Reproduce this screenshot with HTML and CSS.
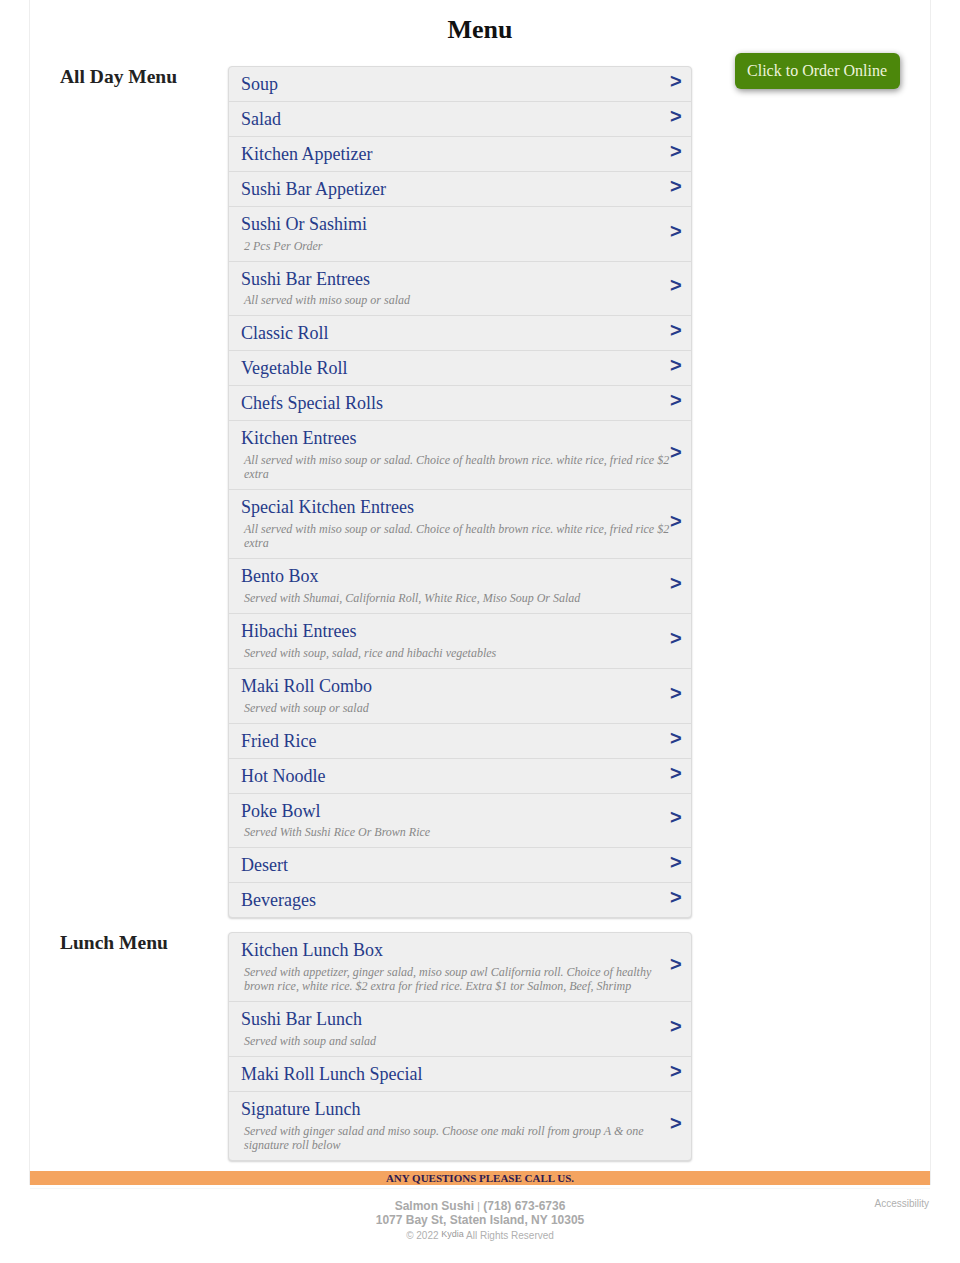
FILE: index.html
```html
<!DOCTYPE html>
<html lang="en">
<head>
<meta charset="utf-8">
<title>Menu</title>
<link rel="stylesheet" href="styles.css">
</head>
<body>
<div class="page">
  <h1 class="title">Menu</h1>

  <section class="section">
    <h2 class="label">All Day Menu</h2>
    <div class="list">
      <a class="row"><div class="info"><div class="name">Soup</div></div><span class="arrow">&gt;</span></a>
      <a class="row"><div class="info"><div class="name">Salad</div></div><span class="arrow">&gt;</span></a>
      <a class="row"><div class="info"><div class="name">Kitchen Appetizer</div></div><span class="arrow">&gt;</span></a>
      <a class="row"><div class="info"><div class="name">Sushi Bar Appetizer</div></div><span class="arrow">&gt;</span></a>
      <a class="row"><div class="info"><div class="name">Sushi Or Sashimi</div><div class="desc">2 Pcs Per Order</div></div><span class="arrow">&gt;</span></a>
      <a class="row"><div class="info"><div class="name">Sushi Bar Entrees</div><div class="desc">All served with miso soup or salad</div></div><span class="arrow">&gt;</span></a>
      <a class="row"><div class="info"><div class="name">Classic Roll</div></div><span class="arrow">&gt;</span></a>
      <a class="row"><div class="info"><div class="name">Vegetable Roll</div></div><span class="arrow">&gt;</span></a>
      <a class="row"><div class="info"><div class="name">Chefs Special Rolls</div></div><span class="arrow">&gt;</span></a>
      <a class="row"><div class="info"><div class="name">Kitchen Entrees</div><div class="desc">All served with miso soup or salad. Choice of health brown rice. white rice, fried rice $2 extra</div></div><span class="arrow">&gt;</span></a>
      <a class="row"><div class="info"><div class="name">Special Kitchen Entrees</div><div class="desc">All served with miso soup or salad. Choice of health brown rice. white rice, fried rice $2 extra</div></div><span class="arrow">&gt;</span></a>
      <a class="row"><div class="info"><div class="name">Bento Box</div><div class="desc">Served with Shumai, California Roll, White Rice, Miso Soup Or Salad</div></div><span class="arrow">&gt;</span></a>
      <a class="row"><div class="info"><div class="name">Hibachi Entrees</div><div class="desc">Served with soup, salad, rice and hibachi vegetables</div></div><span class="arrow">&gt;</span></a>
      <a class="row"><div class="info"><div class="name">Maki Roll Combo</div><div class="desc">Served with soup or salad</div></div><span class="arrow">&gt;</span></a>
      <a class="row"><div class="info"><div class="name">Fried Rice</div></div><span class="arrow">&gt;</span></a>
      <a class="row"><div class="info"><div class="name">Hot Noodle</div></div><span class="arrow">&gt;</span></a>
      <a class="row"><div class="info"><div class="name">Poke Bowl</div><div class="desc">Served With Sushi Rice Or Brown Rice</div></div><span class="arrow">&gt;</span></a>
      <a class="row"><div class="info"><div class="name">Desert</div></div><span class="arrow">&gt;</span></a>
      <a class="row"><div class="info"><div class="name">Beverages</div></div><span class="arrow">&gt;</span></a>
    </div>
    <div class="side">
      <a class="order-btn">Click to Order Online</a>
    </div>
  </section>

  <section class="section">
    <h2 class="label">Lunch Menu</h2>
    <div class="list">
      <a class="row"><div class="info"><div class="name">Kitchen Lunch Box</div><div class="desc">Served with appetizer, ginger salad, miso soup awl California roll. Choice of healthy brown rice, white rice. $2 extra for fried rice. Extra $1 tor Salmon, Beef, Shrimp</div></div><span class="arrow">&gt;</span></a>
      <a class="row"><div class="info"><div class="name">Sushi Bar Lunch</div><div class="desc">Served with soup and salad</div></div><span class="arrow">&gt;</span></a>
      <a class="row"><div class="info"><div class="name">Maki Roll Lunch Special</div></div><span class="arrow">&gt;</span></a>
      <a class="row"><div class="info"><div class="name">Signature Lunch</div><div class="desc">Served with ginger salad and miso soup. Choose one maki roll from group A &amp; one signature roll below</div></div><span class="arrow">&gt;</span></a>
    </div>
    <div class="side"></div>
  </section>

  <div class="notice">ANY QUESTIONS PLEASE CALL US.</div>
</div>

<footer class="footer">
  <div class="footer-info">
    <div class="biz"><span>Salmon Sushi</span> <span class="sep">|</span> <span>(718) 673-6736</span></div>
    <div class="biz">1077 Bay St, Staten Island, NY 10305</div>
    <div class="copy">© 2022 <span class="brand">Kydia</span> All Rights Reserved</div>
  </div>
  <a class="access">Accessibility</a>
</footer>
</body>
</html>
```

FILE: styles.css
```css
* { box-sizing: border-box; }

html, body {
  margin: 0;
  padding: 0;
  background: #fff;
}

body {
  font-family: "Liberation Serif", "Times New Roman", serif;
  color: #222;
}

.page {
  margin: 0 29px;
  border-left: 1px solid #eeeeee;
  border-right: 1px solid #eeeeee;
  padding-top: 15px;
}

.title {
  margin: 0;
  text-align: center;
  font-size: 26px;
  line-height: 30px;
  font-weight: bold;
  color: #111;
}

.section {
  display: grid;
  grid-template-columns: 198px 464px 1fr;
  align-items: start;
  margin-top: 21px;
}

.section + .section {
  margin-top: 14px;
}

.label {
  margin: 0;
  padding-left: 30px;
  font-size: 19.5px;
  line-height: 22px;
  font-weight: bold;
  color: #222;
}

.list {
  background: #efefef;
  border: 1px solid #dcdcdc;
  border-radius: 4px;
  box-shadow: 0 1px 2px rgba(0, 0, 0, 0.18);
  overflow: hidden;
}

.row {
  display: flex;
  align-items: center;
  padding: 7px 10px 6px 12px;
  border-top: 1px solid #dcdcdc;
  color: #263b8a;
  text-decoration: none;
  cursor: pointer;
}

.row:first-child {
  border-top: 0;
}

.info {
  flex: 1;
  min-width: 0;
}

.name {
  font-size: 18px;
  line-height: 20.9px;
  color: #263b8a;
}

.desc {
  margin: 4px 0 2px 3px;
  font-size: 12px;
  line-height: 14px;
  font-style: italic;
  color: #888;
}

.arrow {
  flex-shrink: 0;
  width: 11px;
  margin-top: -7px;
  font-family: "Liberation Sans", Arial, sans-serif;
  font-weight: bold;
  font-size: 20px;
  line-height: 20px;
  color: #263b8a;
}

.side {
  display: flex;
  justify-content: flex-end;
  padding-right: 30px;
  margin-top: -13px;
}

.order-btn {
  display: inline-block;
  padding: 8px 13px 8px 12px;
  background: #4c870b;
  color: #eef4dc;
  font-size: 16px;
  line-height: 20px;
  border-radius: 6px;
  box-shadow: 1px 2px 6px rgba(0, 0, 0, 0.45);
  cursor: pointer;
}

.notice {
  margin-top: 10px;
  background: #f4a460;
  text-align: center;
  font-size: 11px;
  line-height: 14px;
  font-weight: bold;
  color: #2e1a4e;
}

.footer {
  display: flex;
  justify-content: center;
  margin: 3px 30px 0;
  padding-top: 10px;
  position: relative;
  font-family: "Liberation Sans", Arial, sans-serif;
  border-top: 1px solid #f4f7fa;
}

.footer-info {
  text-align: center;
  color: #a9a9a9;
}

.biz {
  font-size: 12px;
  line-height: 14px;
  font-weight: bold;
}

.sep {
  font-weight: normal;
  font-size: 10px;
  line-height: 1;
}

.copy {
  margin-top: 1px;
  font-size: 10px;
  line-height: 16px;
  color: #b0b0b0;
}

.brand {
  font-size: 9px;
  line-height: 0;
  vertical-align: 2px;
  color: #999;
}

.access {
  position: absolute;
  right: 1px;
  top: 9px;
  font-size: 10px;
  line-height: 12px;
  color: #b0b0b0;
  cursor: pointer;
}
```
